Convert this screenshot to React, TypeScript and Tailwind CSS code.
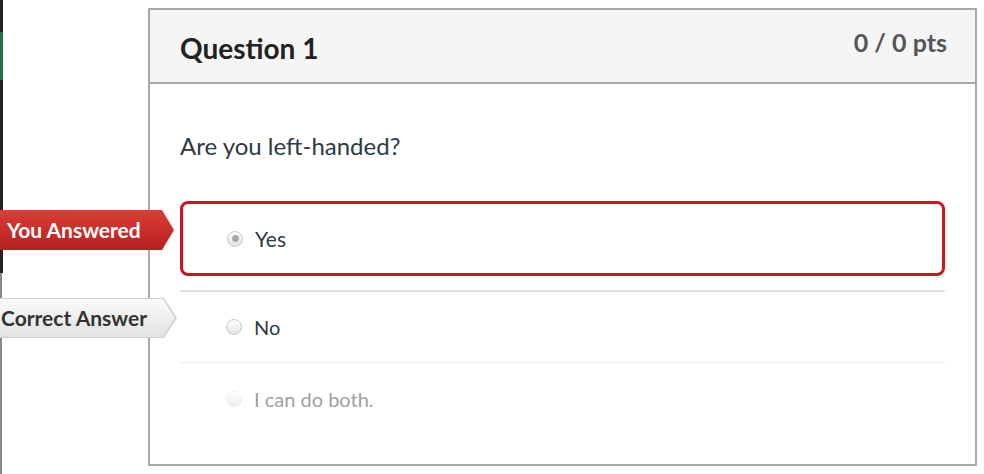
import React from 'react';

const font = { fontFamily: 'Lato, "Open Sans", Arial, sans-serif' };

function Radio({ checked, faded }: { checked?: boolean; faded?: boolean }) {
  return (
    <span
      className={
        'flex h-[16px] w-[16px] shrink-0 items-center justify-center rounded-full border bg-gradient-to-b from-[#ffffff] to-[#e4e4e4] ' +
        (faded ? 'border-[#e6e6e6] opacity-60' : 'border-[#c8c8c8]')
      }
    >
      {checked && <span className="h-[7px] w-[7px] rounded-full bg-[#a9a9a9]" />}
    </span>
  );
}

function App() {
  const answers = [
    { text: 'Yes', picked: true },
    { text: 'No', correct: true },
    { text: 'I can do both.', faded: true },
  ];

  return (
    <div className="relative flex h-[474px] w-[984px] overflow-hidden bg-white text-[#2d3b45]" style={font}>
      {/* edge of the sidebar behind */}
      <div className="flex w-[3px] flex-col">
        <div className="h-[32px] bg-[#232323]" />
        <div className="h-[48px] bg-[#2f6b4b]" />
        <div className="h-[193px] bg-[#232323]" />
        <div className="w-[2px] flex-1 bg-[#8a8a8a]" />
      </div>

      <div className="ml-[145px] mt-[8px] flex h-[458px] w-[829px] flex-col border-2 border-[#a9a9a9]">
        <header className="flex h-[74px] justify-between border-b-2 border-[#a9a9a9] bg-[#f5f5f5] pl-[30px] pr-[28px]">
          <h2 className="pt-[21px] text-[28px] font-bold leading-[34px] text-[#222]">Question 1</h2>
          <div className="pt-[17px] text-[25px] font-bold leading-[30px] text-[#555]">0 / 0 pts</div>
        </header>

        <div className="flex flex-col px-[30px]">
          <p className="mt-[47px] text-[24px] leading-[30px] text-[#2d3b45]">Are you left-handed?</p>

          <div className="mt-[40px] flex flex-col">
            {answers.map((a, i) => (
              <div key={a.text} className="relative">
                {a.picked ? (
                  <div className="mb-[14px] flex h-[75px] items-center gap-[12px] rounded-[8px] border-[3px] border-[#c8171e] pl-[44px]">
                    <Radio checked />
                    <span className="text-[21px] text-[#2d3b45]">{a.text}</span>
                  </div>
                ) : (
                  <div
                    className={
                      'flex h-[72px] items-center gap-[12px] pl-[46px] ' +
                      (i === 1 ? 'border-t-2 border-[#e0e0e0]' : 'border-t border-[#ececec]')
                    }
                  >
                    <Radio faded={a.faded} />
                    <span className={'text-[20px] ' + (a.faded ? 'text-[#a0a0a0]' : 'text-[#2d3b45]')}>{a.text}</span>
                  </div>
                )}

                {a.picked && (
                  <div
                    className="absolute left-[-180px] top-[9px] flex h-[40px] w-[174px] items-center bg-gradient-to-b from-[#dc3d37] to-[#b51f1f] pl-[7px] text-[21px] font-bold text-white"
                    style={{ clipPath: 'polygon(0 0, 162px 0, 174px 50%, 162px 100%, 0 100%)' }}
                  >
                    You Answered
                  </div>
                )}
                {a.correct && (
                  <div
                    className="absolute left-[-180px] top-[8px] h-[40px] w-[177px] bg-[#cfcfcf]"
                    style={{ clipPath: 'polygon(0 0, 164px 0, 177px 50%, 164px 100%, 0 100%)' }}
                  >
                    <div
                      className="flex h-[38px] w-[175px] translate-y-[1px] items-center bg-gradient-to-b from-[#fbfbfb] to-[#e2e2e2] pl-[1px] text-[21px] font-bold text-[#333]"
                      style={{ clipPath: 'polygon(0 0, 163px 0, 175px 50%, 163px 100%, 0 100%)' }}
                    >
                      Correct Answer
                    </div>
                  </div>
                )}
              </div>
            ))}
          </div>
        </div>
      </div>
    </div>
  );
}

export default App;
